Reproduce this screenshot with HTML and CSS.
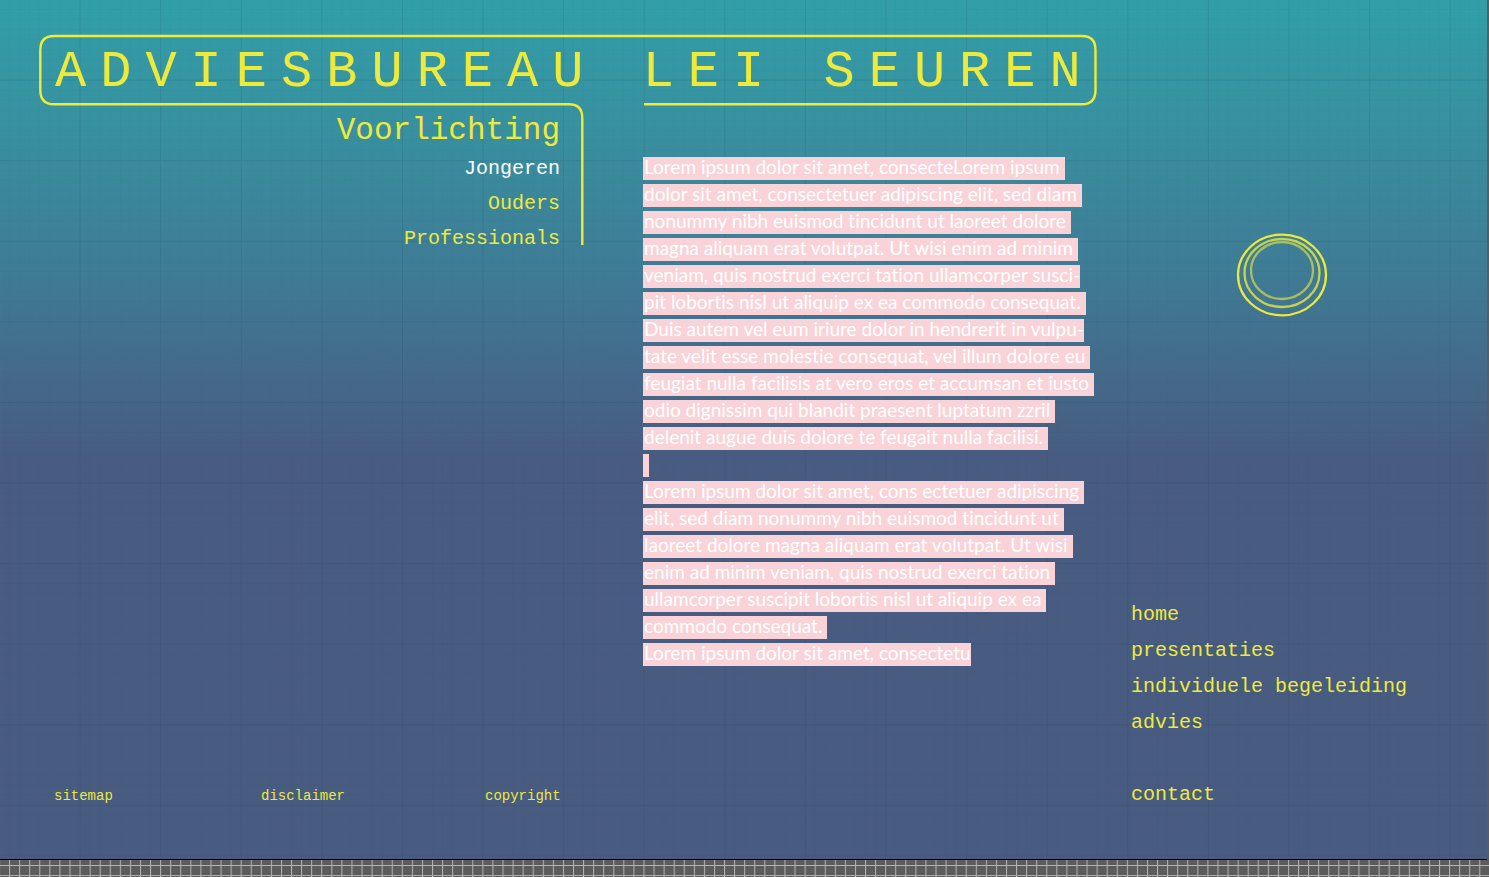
FILE: index.html
```html
<!DOCTYPE html>
<html lang="nl">
<head>
<meta charset="utf-8">
<title>Adviesbureau Lei Seuren</title>
<meta name="viewport" content="width=device-width, initial-scale=1">
<link rel="stylesheet" href="styles.css">
</head>
<body>
<div class="page">
  <div class="artboard">
    <svg class="grid-lines" aria-hidden="true">
      <defs>
        <pattern id="minor" x="-1" y="-1" width="10.07" height="10.07" patternUnits="userSpaceOnUse">
          <path d="M0 .5H10.07M.5 0V10.07" stroke="#1d4a6a" stroke-opacity=".04"/>
        </pattern>
        <pattern id="major" x="-1" y="-1" width="80.6" height="80.6" patternUnits="userSpaceOnUse">
          <path d="M0 .5H80.6M.5 0V80.6" stroke="#14405c" stroke-opacity=".12"/>
        </pattern>
      </defs>
      <rect width="100%" height="100%" fill="url(#minor)"/>
      <rect width="100%" height="100%" fill="url(#major)"/>
    </svg>

    <header class="header">
      <svg class="frame" width="1060" height="214" viewBox="38 34 1060 214" aria-hidden="true">
        <path d="M582.3 245V118Q582.3 104.3 569 104.3H54Q40.3 104.3 40.3 90V50Q40.3 36 54 36H1082Q1095.5 36 1095.5 50V90Q1095.5 104.3 1082 104.3H644"/>
      </svg>
      <h1 class="title">ADVIESBUREAU LEI SEUREN</h1>
    </header>

    <nav class="topics" aria-label="Voorlichting">
      <h2 class="topics-title">Voorlichting</h2>
      <a class="topic topic-current" href="#jongeren">Jongeren</a>
      <a class="topic" href="#ouders">Ouders</a>
      <a class="topic" href="#professionals">Professionals</a>
    </nav>

    <main class="copy">
      <span class="line">Lorem ipsum dolor sit amet, consecteLorem ipsum</span>
      <span class="line">dolor sit amet, consectetuer adipiscing elit, sed diam</span>
      <span class="line">nonummy nibh euismod tincidunt ut laoreet dolore</span>
      <span class="line">magna aliquam erat volutpat. Ut wisi enim ad minim</span>
      <span class="line line-tight">veniam, quis nostrud exerci tation ullamcorper susci-</span>
      <span class="line">pit lobortis nisl ut aliquip ex ea commodo consequat.</span>
      <span class="line line-tight">Duis autem vel eum iriure dolor in hendrerit in vulpu-</span>
      <span class="line">tate velit esse molestie consequat, vel illum dolore eu</span>
      <span class="line">feugiat nulla facilisis at vero eros et accumsan et iusto</span>
      <span class="line">odio dignissim qui blandit praesent luptatum zzril</span>
      <span class="line">delenit augue duis dolore te feugait nulla facilisi.</span>
      <span class="line line-empty"></span>
      <span class="line">Lorem ipsum dolor sit amet, cons ectetuer adipiscing</span>
      <span class="line">elit, sed diam nonummy nibh euismod tincidunt ut</span>
      <span class="line">laoreet dolore magna aliquam erat volutpat. Ut wisi</span>
      <span class="line">enim ad minim veniam, quis nostrud exerci tation</span>
      <span class="line">ullamcorper suscipit lobortis nisl ut aliquip ex ea</span>
      <span class="line">commodo consequat.</span>
      <span class="line line-tight">Lorem ipsum dolor sit amet, consectetu</span>
    </main>

    <aside class="side">
      <svg class="rings" width="92" height="84" viewBox="0 0 92 84" aria-hidden="true">
        <ellipse cx="46" cy="42" rx="44" ry="40.3"/>
        <ellipse cx="46" cy="40" rx="37.5" ry="34" stroke-opacity=".8"/>
        <ellipse cx="46" cy="37.5" rx="31" ry="28.5" stroke-opacity=".62"/>
      </svg>
      <nav class="menu" aria-label="Hoofdmenu">
        <a href="#home">home</a>
        <a href="#presentaties">presentaties</a>
        <a href="#begeleiding">individuele begeleiding</a>
        <a href="#advies">advies</a>
        <a class="menu-contact" href="#contact">contact</a>
      </nav>
    </aside>

    <footer class="footer">
      <a href="#sitemap">sitemap</a>
      <a href="#disclaimer">disclaimer</a>
      <a href="#copyright">copyright</a>
    </footer>
  </div>
  <div class="pasteboard">
    <svg class="grid-lines" aria-hidden="true">
      <defs>
        <pattern id="paste" x="-1" y="-5" width="10.07" height="10.07" patternUnits="userSpaceOnUse">
          <path d="M0 .5H10.07M.5 0V10.07" stroke="#b4b4b4"/>
        </pattern>
      </defs>
      <rect width="100%" height="100%" fill="url(#paste)"/>
    </svg>
  </div>
</div>
</body>
</html>
```
FILE: styles.css
```css
* {
  box-sizing: border-box;
}

body {
  margin: 0;
  background: #5c5c5c;
  color: #eeea3c;
  font-family: "Liberation Mono", "Courier New", monospace;
}

a {
  color: inherit;
  text-decoration: none;
}

h1,
h2 {
  margin: 0;
  font-weight: 400;
}

.page {
  display: flex;
  flex-direction: column;
  min-height: 100vh;
}

.artboard {
  position: relative;
  flex: 1;
  display: grid;
  grid-template-columns: 644px 487px 1fr;
  grid-template-rows: auto 1fr auto;
  margin-right: 2px;
  border-bottom: 1px solid #000;
  background: linear-gradient(#319fa8 0, #38909f 130px, #3f7b95 275px, #485b80 460px);
}

.grid-lines {
  position: absolute;
  inset: 0;
  width: 100%;
  height: 100%;
}

.header {
  position: relative;
  grid-column: 1 / -1;
  grid-row: 1;
  padding: 43px 0 10px 55px;
}

.frame {
  position: absolute;
  top: 34px;
  left: 38px;
  fill: none;
  stroke: #f0ec35;
  stroke-width: 2.4;
}

.title {
  font-size: 52px;
  line-height: 60px;
  letter-spacing: 14px;
  white-space: nowrap;
}

.topics {
  position: relative;
  grid-column: 1;
  grid-row: 2;
  display: flex;
  flex-direction: column;
  align-items: flex-end;
  padding-right: 84px;
}

.topics-title {
  margin-bottom: 2px;
  font-size: 31px;
  line-height: 36px;
}

.topic {
  font-size: 20px;
  line-height: 35px;
}

.topic-current {
  color: #fff;
}

.copy {
  position: relative;
  grid-column: 2;
  grid-row: 2 / 4;
  display: flex;
  flex-direction: column;
  align-items: flex-start;
  gap: 4px;
  margin-left: -1px;
  padding: 44px 0 40px;
  color: #fff;
  font-family: Lato, "Open Sans", sans-serif;
  font-size: 19px;
  font-variant-ligatures: none;
  line-height: 19px;
}

.line {
  padding: 0 5px 4px 1px;
  background: #f9d3d8;
  white-space: nowrap;
}

.line-tight {
  padding-right: 0;
}

.line-empty {
  height: 23px;
}

.side {
  position: relative;
  grid-column: 3;
  grid-row: 1 / 4;
  display: flex;
  flex-direction: column;
  padding: 233px 0 46px;
}

.rings {
  margin-left: 105px;
  fill: none;
  stroke: #ebe93f;
  stroke-width: 2.3;
}

.menu {
  display: flex;
  flex-direction: column;
  margin-top: auto;
  font-size: 20px;
  line-height: 36px;
}

.menu-contact {
  margin-top: 36px;
}

.footer {
  position: relative;
  grid-column: 1;
  grid-row: 3;
  display: grid;
  grid-template-columns: 207px 224px auto;
  justify-content: start;
  padding: 0 0 53px 54px;
  font-size: 14px;
  line-height: 20px;
}

.pasteboard {
  position: relative;
  height: 17px;
}
```
